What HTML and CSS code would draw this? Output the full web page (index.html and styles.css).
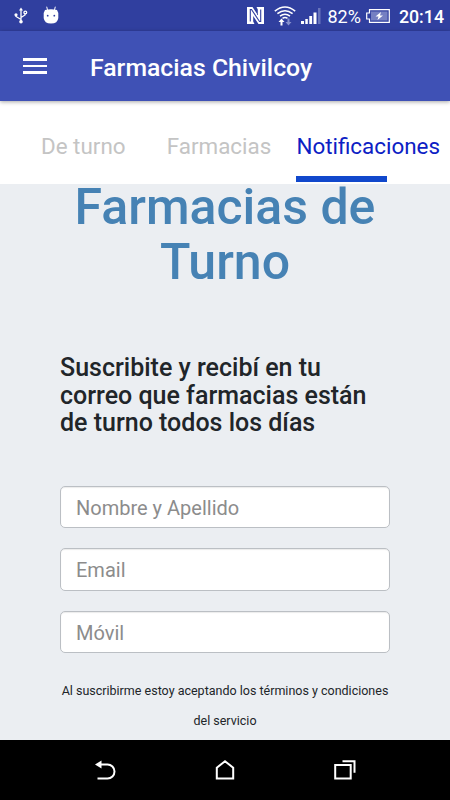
FILE: index.html
```html
<!DOCTYPE html>
<html lang="es">
  <head>
    <meta charset="UTF-8" />
    <meta name="viewport" content="width=device-width, initial-scale=1.0" />
    <title>Farmacias Chivilcoy</title>
    <link rel="stylesheet" href="styles.css">
  </head>
  <body>
    <div class="status-bar">
      <svg class="usb-icon" width="14" height="17" viewBox="0 0 14 17" fill="none" stroke="#fff" stroke-width="1.3">
        <path d="M7 2v12M2 8.500v1l5 3M11 6v2l-4 2.500" />
        <path d="M5 3.500l2-3 2 3z" fill="#fff" stroke="none" />
        <circle cx="7" cy="14.800" r="1.800" fill="#fff" stroke="none" />
        <circle cx="2" cy="7.800" r="1.600" fill="#fff" stroke="none" />
        <circle cx="11.300" cy="5.500" r="1.400" />
      </svg>
      <svg class="droid-icon" width="16" height="18" viewBox="0 0 16 18">
        <path d="M4.500 4L3.700.700M11.500 4l.800-3.300" stroke="#fff" stroke-width="1" />
        <path d="M2 4q6-1.500 12 0l1.300 3v5q-.500 5.500-7.300 5.500T.700 12V7z" fill="#fff" />
        <circle cx="4.700" cy="9.700" r=".9" fill="#303f9f" />
        <circle cx="11.300" cy="9.700" r=".9" fill="#303f9f" />
      </svg>
      <div class="status-right">
        <svg width="17" height="17" viewBox="0 0 17 17">
          <path d="M0 0h5.500l5.300 8V2.500L9.500 0H17v17h-5.500l-5.300-8v5.500L7.500 17H0z" fill="#fff" />
          <path d="M3.300 14.500V2.500h1.200l8 12h1.200v-12" fill="none" stroke="#303f9f" stroke-width="1.100" />
        </svg>
        <svg class="wifi-icon" width="22" height="20" viewBox="0 0 22 20" fill="none" stroke="#fff" stroke-width="1.500">
          <path d="M.8 5.200q10.200-8.400 20.400 0M3.400 7.700q7.600-6 15.200 0M6 10.200q5-4 10 0M8.500 12.300q2.500-1.800 5 0" />
          <path d="M7.500 12.500l3 3.500h-2v3.500h-2V16h-2z" fill="#fff" stroke="none" />
          <path d="M14.500 19.500l-3-3.500h2v-3.500h2V16h2z" fill="#8791cc" stroke="none" />
        </svg>
        <svg class="signal-icon" width="20" height="16" viewBox="0 0 20 16" fill="#fff">
          <path d="M0 13h3v3H0zM4.300 11h2.500v5H4.300zM8.300 8h2.800v8H8.300zM12.500 4.500h3V16h-3z" />
          <path d="M17 0h2.500v16H17z" fill="#6874bb" />
        </svg>
        <span class="battery-level">82%</span>
        <svg class="battery-icon" width="24" height="14" viewBox="0 0 24 14">
          <path d="M3.500.7h19.800v12.600H3.500V10H.7V4h2.800z" fill="none" stroke="#fff" stroke-width="1.200" />
          <path d="M5 2.500h16.500v9H5z" fill="#7580c2" />
          <path d="M15 3l-5.500 4.500h3L11.500 11 17 6.500h-3z" fill="#fff" />
        </svg>
        <span class="clock">20:14</span>
      </div>
    </div>

    <header class="app-bar">
      <button class="menu-btn" aria-label="Menú">
        <span></span>
        <span></span>
        <span></span>
      </button>
      <div class="app-title">Farmacias Chivilcoy</div>
    </header>

    <nav class="tabs">
      <a class="tab">De turno</a>
      <a class="tab">Farmacias</a>
      <a class="tab active">Notificaciones</a>
    </nav>

    <main class="content">
      <h1 class="title">Farmacias de Turno</h1>
      <h3 class="subtitle">Suscribite y recibí en tu correo que farmacias están de turno todos los días</h3>
      <form class="subscribe-form">
        <input class="form-control" type="text" placeholder="Nombre y Apellido" />
        <input class="form-control" type="email" placeholder="Email" />
        <input class="form-control" type="text" placeholder="Móvil" />
      </form>
      <p class="terms">Al suscribirme estoy aceptando los términos y condiciones del servicio</p>
    </main>

    <div class="nav-bar">
      <svg width="24" height="24" viewBox="0 0 24 24" fill="none" stroke="#fff" stroke-width="2">
        <path d="M6 6.500h8.500a7 7 0 0 1 0 14H4.500" />
        <path d="M2 6.500l6.500-4v8z" fill="#fff" stroke="none" />
      </svg>
      <svg width="24" height="24" viewBox="0 0 24 24" fill="none" stroke="#fff" stroke-width="2">
        <path d="M3.800 20.500V9.800L12 3.200l8.200 6.600v10.700z" />
      </svg>
      <svg width="24" height="24" viewBox="0 0 24 24" fill="none" stroke="#fff" stroke-width="2">
        <path d="M2.200 7h15.500v13.500H2.200z" />
        <path d="M9.500 3.300h12v11.500" />
      </svg>
    </div>
  </body>
</html>
```
FILE: styles.css
```css
* {
  margin: 0;
  padding: 0;
  box-sizing: border-box;
}

body {
  font-family: Roboto, sans-serif;
  background: #ebeef2;
  display: flex;
  flex-direction: column;
  height: 100vh;
  overflow: hidden;
}

.status-bar {
  display: flex;
  align-items: center;
  flex-shrink: 0;
  height: 31px;
  padding: 0 6px 0 14px;
  background: #303f9f;
  color: white;
}

.droid-icon {
  margin: -2px 0 0 15px;
}

.status-right {
  display: flex;
  align-items: center;
  margin-left: auto;
  height: 31px;
}

.wifi-icon {
  margin-left: 10px;
}

.signal-icon {
  margin-left: 5px;
}

.battery-level {
  margin-left: 6px;
  padding-top: 2px;
  font-size: 18px;
}

.battery-icon {
  margin-left: 5px;
}

.clock {
  margin-left: 9px;
  padding-top: 2px;
  font-size: 17.8px;
  font-weight: 500;
}

.app-bar {
  display: flex;
  align-items: center;
  flex-shrink: 0;
  height: 70px;
  padding-left: 23px;
  background: #3f51b5;
  color: white;
  box-shadow: 0 1px 4px rgba(0, 0, 0, 0.35);
  z-index: 1;
}

.menu-btn {
  display: flex;
  flex-direction: column;
  gap: 4px;
  width: 24px;
  border: none;
  background: none;
}

.menu-btn span {
  height: 2.5px;
  background: white;
}

.app-title {
  margin: 3px 0 0 43px;
  font-size: 24.8px;
  font-weight: 500;
}

.tabs {
  display: flex;
  flex-shrink: 0;
  height: 83px;
  padding: 0 10px 2px 41px;
  justify-content: space-between;
  background: white;
}

.tab {
  display: grid;
  grid-template-rows: 1fr 6px;
  align-items: center;
  padding-top: 15px;
  font-size: 22.4px;
  color: #c4c4c4;
}

.tab:first-child {
  margin-right: 16px;
}

.tab.active {
  color: #0c20c4;
}

.tab.active::after {
  content: "";
  width: 91px;
  height: 6px;
  background: #1148cc;
}

.content {
  flex: 1;
  padding: 0 60px;
}

.title {
  margin-top: -4px;
  font-size: 50px;
  line-height: 55px;
  font-weight: 500;
  text-align: center;
  color: #4682b4;
}

.subtitle {
  margin-top: 64px;
  font-size: 25px;
  line-height: 27.5px;
  font-weight: 500;
  color: #212529;
}

.subscribe-form {
  display: flex;
  flex-direction: column;
  gap: 20px;
  margin-top: 49px;
}

.form-control {
  width: 100%;
  height: 42.5px;
  padding: 2px 15px 0;
  border: 1px solid #bbbfc4;
  border-radius: 5px;
  background: white;
  box-shadow: inset 0 1px 1px rgba(0, 0, 0, 0.08);
  font-family: inherit;
  font-size: 20px;
}

.form-control::placeholder {
  color: #8c8c8c;
}

.terms {
  margin: 22.5px -10px 0;
  padding: 0 10px;
  font-size: 12.5px;
  line-height: 30px;
  text-align: center;
  color: #212529;
}

.nav-bar {
  display: flex;
  align-items: center;
  justify-content: space-between;
  flex-shrink: 0;
  height: 60px;
  padding: 0 93px;
  background: black;
}
```
